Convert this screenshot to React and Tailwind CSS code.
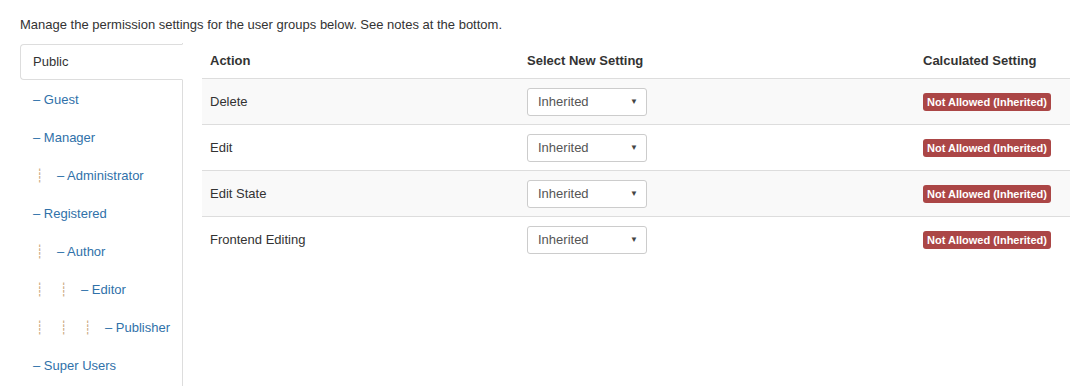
const groups = [
  { name: 'Public', level: 0, root: true },
  { name: 'Guest', level: 0 },
  { name: 'Manager', level: 0 },
  { name: 'Administrator', level: 1 },
  { name: 'Registered', level: 0 },
  { name: 'Author', level: 1 },
  { name: 'Editor', level: 2 },
  { name: 'Publisher', level: 3 },
  { name: 'Super Users', level: 0 },
];

const actions = ['Delete', 'Edit', 'Edit State', 'Frontend Editing'];

const GroupTab = ({ group, active }) => {
  const base = 'h-[36px] mb-[2px] flex items-center pl-[12px] border whitespace-nowrap';
  const cls = active
    ? `${base} bg-white border-[#ddd] border-r-transparent rounded-l-[4px] mr-[-1px] text-[#333]`
    : `${base} border-transparent text-[#3071a9]`;

  return (
    <li className={cls}>
      {Array.from({ length: group.level }).map((_, i) => (
        <span
          key={i}
          className="inline-block w-[24px] pl-[3px] text-[#c9a67c] text-[13px]"
          style={{ fontFamily: '"DejaVu Sans", sans-serif' }}
        >
          ┊
        </span>
      ))}
      <span>{group.root ? group.name : `– ${group.name}`}</span>
    </li>
  );
};

const SettingSelect = () => (
  <div className="w-[120px] h-[28px] bg-white border border-[#ccc] rounded-[3px] flex items-center justify-between pl-[10px] pr-[8px] text-[#555]">
    <span>Inherited</span>
    <span className="text-[8px] text-[#444]">▼</span>
  </div>
);

export default function App() {
  return (
    <div
      className="bg-white min-h-screen pt-[16px] pl-[20px] pr-[4px] text-[13px] leading-[18px] text-[#333]"
      style={{ fontFamily: '"Liberation Sans", Arial, sans-serif' }}
    >
      <p className="mb-[9px]">
        Manage the permission settings for the user groups below. See notes at the bottom.
      </p>

      <div className="flex">
        {/* user group tabs */}
        <ul className="w-[163px] shrink-0 border-r border-[#ddd] mr-[19px] pt-[1px] pb-[10px]">
          {groups.map((g, i) => (
            <GroupTab key={g.name} group={g} active={i === 0} />
          ))}
        </ul>

        {/* permissions table */}
        <div className="flex-1 self-start">
          <div className="h-[36px] flex items-center font-bold border-b border-[#ddd]">
            <div className="w-[317px] pl-[8px]">Action</div>
            <div className="w-[396px] pl-[8px]">Select New Setting</div>
            <div className="flex-1 pl-[8px]">Calculated Setting</div>
          </div>

          {actions.map((a, i) => (
            <div
              key={a}
              className={`h-[46px] flex items-center ${i % 2 === 0 ? 'bg-[#f9f9f9]' : 'bg-white'} ${
                i < actions.length - 1 ? 'border-b border-[#ddd]' : ''
              }`}
            >
              <div className="w-[317px] pl-[8px]">{a}</div>
              <div className="w-[396px] pl-[8px]">
                <SettingSelect />
              </div>
              <div className="flex-1 pl-[8px]">
                <span className="inline-block bg-[#ab4646] text-white font-bold text-[11px] leading-[14px] px-[4px] py-[2px] rounded-[3px]">
                  Not Allowed (Inherited)
                </span>
              </div>
            </div>
          ))}
        </div>
      </div>
    </div>
  );
}
